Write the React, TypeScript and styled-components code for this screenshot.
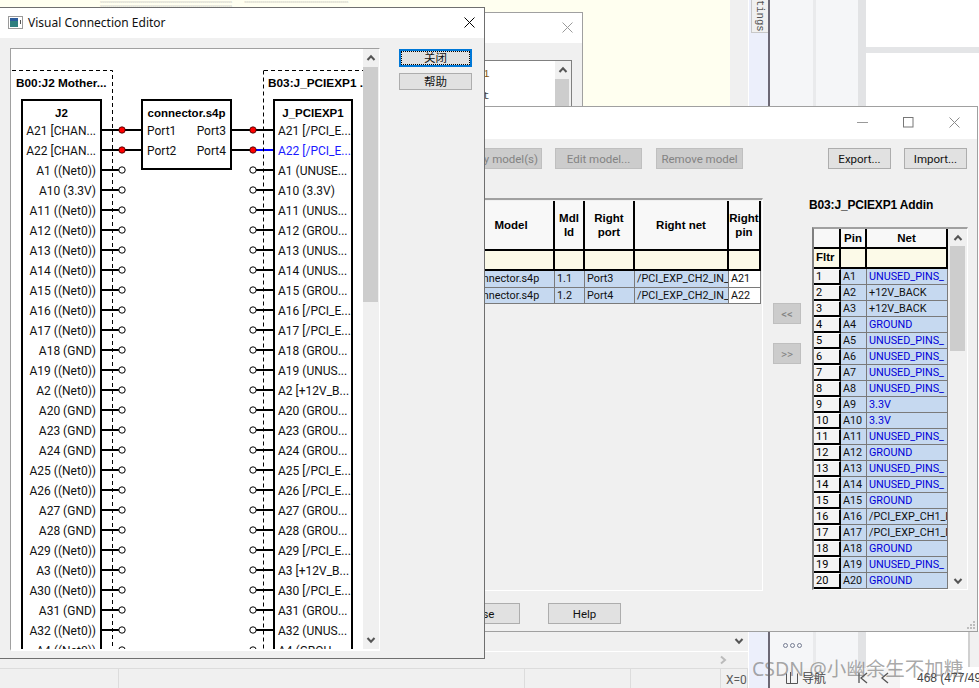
import React from "react";
import styled, { createGlobalStyle } from "styled-components";

const Global = createGlobalStyle`
  html, body { margin: 0; padding: 0; background: #f0f0f0; }
  body { font-family: "Liberation Sans", Arial, sans-serif; overflow: hidden; }
  * { box-sizing: border-box; }
`;

const Desktop = styled.div`
  position: relative;
  width: 979px;
  height: 688px;
  overflow: hidden;
  background: #f0f0f0;
`;

/* ---------- background application ---------- */
const Backdrop = styled.div`
  display: flex;
  height: 688px;
`;
const WorkColumn = styled.div`
  width: 748px;
  display: flex;
  flex-direction: column;
`;
const Editor = styled.div`
  height: 631px;
  display: flex;
  flex-direction: column;
  background: #f0f0f0;
`;
const YellowPane = styled.div`
  width: 730px;
  height: 631px;
  background: #fffff0;
  padding: 0 0 0 100px;
`;
const NoiseLine = styled.div`
  font-size: 4px;
  line-height: 4px;
  color: #c4c4bc;
  white-space: nowrap;
`;
const LowerPanel = styled.div`
  height: 37px;
  display: flex;
  flex-direction: column;
`;
const LowerInner = styled.div`
  height: 21px;
  width: 748px;
  display: flex;
  justify-content: flex-end;
  align-items: center;
  border-bottom: 1px solid #fff;
  padding-right: 4px;
`;
const LowerEdge = styled.div`
  flex: 1;
  display: flex;
  justify-content: flex-end;
  align-items: center;
  padding-right: 20px;
`;
const StatusBar = styled.div`
  height: 20px;
  border-top: 1px solid #dcdcdc;
  display: flex;
  background: #f0f0f0;
`;
const StatusCell = styled.div<{ $w: number }>`
  width: ${(p) => p.$w}px;
  border-right: 1px solid #dcdcdc;
  font-family: Roboto, sans-serif;
  font-size: 12px;
  color: #5a5a5a;
  padding: 4px 0 0 5px;
  white-space: nowrap;
`;
const SideRail = styled.div`
  width: 22px;
  background: #eceffb;
  border-left: 1px solid #fff;
  border-right: 2px solid #6c6875;
`;
const SideTab = styled.div`
  height: 33px;
  background: #f0f0f0;
  border-bottom: 1px solid #c8c8c8;
  border-left: 1px solid #c8c8c8;
  margin-left: 2px;
  font-family: "Liberation Mono", monospace;
  font-size: 10.5px;
  line-height: 16px;
  color: #555;
  writing-mode: vertical-rl;
  text-align: right;
  overflow: hidden;
`;
const RightArea = styled.div`
  flex: 1;
  display: flex;
  flex-direction: column;
`;
const ToolColumns = styled.div`
  height: 668px;
  display: flex;
`;
const ToolColumn = styled.div<{ $w: number; $bg: string }>`
  width: ${(p) => p.$w}px;
  background: ${(p) => p.$bg};
  display: flex;
  flex-direction: column;
  justify-content: flex-end;
  align-items: center;
`;
const Dots = styled.div`
  display: flex;
  gap: 2px;
  margin-bottom: 20px;
  margin-left: 2px;
`;
const Dot = styled.span`
  width: 5px;
  height: 5px;
  border-radius: 50%;
  border: 1.5px solid #757c92;
`;
const WhitePane = styled.div`
  flex: 1;
  display: flex;
  flex-direction: column;
  background: #fff;
`;
const HBand = styled.div`
  height: 6px;
  margin-top: 47px;
  background: #e4e5e7;
`;
const WhiteFill = styled.div`
  flex: 1;
  display: flex;
  align-items: flex-end;
  justify-content: flex-end;
`;
const Thumb = styled.div`
  width: 24px;
  height: 36px;
  background: #f1f1f1;
  border-left: 2px solid #d0d0d0;
  font-size: 5px;
  line-height: 8px;
  color: #888;
  padding: 5px 0 0 11px;
  margin-bottom: 1px;
`;
const BottomNav = styled.div`
  height: 20px;
  display: flex;
  align-items: center;
  background: linear-gradient(90deg, #f4f4f4 0 130px, #fff 130px);
  font-size: 12px;
  color: #444;
  white-space: nowrap;
`;
const NavLabel = styled.span`
  font-family: "Noto Sans CJK SC", sans-serif;
  font-size: 12px;
  margin-left: 3px;
  line-height: 1;
`;
const NavIcons = styled.div`
  display: flex;
  gap: 10px;
  margin-left: 31px;
  color: #555;
`;
const PageText = styled.span`
  margin-left: 26px;
  font-size: 12px;
  color: #444;
`;

/* ---------- windows ---------- */
const Window = styled.div<{ $l: number; $t: number; $w: number; $h: number; $edge: string }>`
  position: absolute;
  left: ${(p) => p.$l}px;
  top: ${(p) => p.$t}px;
  width: ${(p) => p.$w}px;
  height: ${(p) => p.$h}px;
  background: #f0f0f0;
  border: 1px solid ${(p) => p.$edge};
  display: flex;
  flex-direction: column;
`;
const TitleBar = styled.div<{ $h: number }>`
  height: ${(p) => p.$h}px;
  flex: none;
  background: #fff;
  display: flex;
  align-items: center;
  padding-bottom: 2px;
`;
const TitleIcon = styled.svg`
  margin-left: 8px;
  flex: none;
`;
const TitleText = styled.span`
  margin-left: 5px;
  font-family: "Noto Sans", sans-serif;
  font-size: 12px;
  color: #111;
`;
const TitleGap = styled.div`
  flex: 1;
`;
const Caption = styled.svg<{ $mr: number }>`
  flex: none;
  margin-right: ${(p) => p.$mr}px;
`;

const Btn = styled.div<{ $w: number; $h?: number; $off?: boolean; $focus?: boolean }>`
  width: ${(p) => p.$w}px;
  height: ${(p) => p.$h ?? 21}px;
  flex: none;
  background: ${(p) => (p.$off ? "#cccccc" : "#e1e1e1")};
  border: ${(p) =>
    p.$focus ? "2px solid #0078d7" : `1px solid ${p.$off ? "#bfbfbf" : "#adadad"}`};
  color: ${(p) => (p.$off ? "#838383" : "#111")};
  font-family: Roboto, "Noto Sans CJK SC", sans-serif;
  font-size: 11.5px;
  display: flex;
  align-items: center;
  justify-content: center;
  white-space: nowrap;
  overflow: hidden;
  padding-bottom: ${(p) => (p.$h ? 2 : 0)}px;
  ${(p) => (p.$focus ? "outline: 1px dotted #000; outline-offset: -3px;" : "")}
`;

/* ---------- scrollbars ---------- */
const ScrollTrack = styled.div<{ $w: number }>`
  width: ${(p) => p.$w}px;
  flex: none;
  display: flex;
  flex-direction: column;
  align-items: flex-start;
  background: #f0f0f0;
`;
const ScrollArrow = styled.div<{ $h: number }>`
  height: ${(p) => p.$h}px;
  flex: none;
  align-self: stretch;
  display: flex;
  align-items: center;
  justify-content: center;
`;
const ScrollThumb = styled.div<{ $h: number; $w: number; $ml?: number }>`
  height: ${(p) => p.$h}px;
  width: ${(p) => p.$w}px;
  margin-left: ${(p) => p.$ml ?? 0}px;
  flex: none;
  background: #cdcdcd;
`;
const ScrollSpacer = styled.div`
  flex: 1;
`;

const Chevron = ({ dir }: { dir: "up" | "down" | "right" }) => (
  <svg width="10" height="10" viewBox="0 0 10 10" fill="none" stroke={dir === "right" ? "#bbb" : "#555"} strokeWidth="2">
    {dir === "up" && <path d="M1.5 7 L5 3.2 L8.5 7" />}
    {dir === "down" && <path d="M1.5 3 L5 6.8 L8.5 3" />}
    {dir === "right" && <path d="M3 1.5 L7 5 L3 8.5" />}
  </svg>
);

/* ---------- visual connection editor ---------- */
const EditorBody = styled.div`
  flex: 1;
  display: flex;
  padding: 10px 0 7px 10px;
`;
const Canvas = styled.div`
  width: 370px;
  display: flex;
  border-left: 1px solid #a0a0a0;
  border-top: 1px solid #a0a0a0;
  border-bottom: 2px solid #fff;
  border-right: 1px solid #fff;
`;
const Diagram = styled.div`
  position: relative;
  flex: 1;
  background: #fff;
  overflow: hidden;
`;
const Wires = styled.svg`
  position: absolute;
  left: 0;
  top: 0;
`;
const GroupName = styled.div<{ $l: number }>`
  position: absolute;
  left: ${(p) => p.$l}px;
  top: 27px;
  font-size: 11.8px;
  line-height: 14px;
  font-weight: bold;
  color: #000;
  white-space: nowrap;
`;
const Node = styled.div<{ $l: number; $w: number; $h?: number }>`
  position: absolute;
  left: ${(p) => p.$l}px;
  top: 50px;
  width: ${(p) => p.$w}px;
  ${(p) => (p.$h ? `height: ${p.$h}px;` : "")}
  background: #fff;
  border: 2px solid #000;
  padding-top: 4px;
`;
const NodeTitle = styled.div`
  height: 16px;
  font-size: 11.5px;
  line-height: 16px;
  font-weight: bold;
  text-align: center;
  color: #000;
  white-space: nowrap;
`;
const PinLabel = styled.div<{ $right?: boolean; $blue?: boolean }>`
  height: 20px;
  font-family: Roboto, sans-serif;
  font-size: 12px;
  line-height: 20px;
  white-space: nowrap;
  text-align: ${(p) => (p.$right ? "right" : "left")};
  padding: ${(p) => (p.$right ? "0 4px 0 0" : "0 0 0 3px")};
  color: ${(p) => (p.$blue ? "#1a1aff" : "#111")};
`;
const PortRow = styled.div`
  height: 20px;
  display: flex;
  justify-content: space-between;
  padding: 0 4px;
  font-family: Roboto, sans-serif;
  font-size: 12px;
  line-height: 20px;
  color: #111;
`;

const leftPins = [
  "A21 [CHAN...", "A22 [CHAN...", "A1 ((Net0))", "A10 (3.3V)", "A11 ((Net0))", "A12 ((Net0))", "A13 ((Net0))",
  "A14 ((Net0))", "A15 ((Net0))", "A16 ((Net0))", "A17 ((Net0))", "A18 (GND)", "A19 ((Net0))", "A2 ((Net0))",
  "A20 (GND)", "A23 (GND)", "A24 (GND)", "A25 ((Net0))", "A26 ((Net0))", "A27 (GND)", "A28 (GND)", "A29 ((Net0))",
  "A3 ((Net0))", "A30 ((Net0))", "A31 (GND)", "A32 ((Net0))", "A4 ((Net0))",
];
const rightPins = [
  "A21 [/PCI_E...", "A22 [/PCI_E...", "A1 (UNUSE...", "A10 (3.3V)", "A11 (UNUS...", "A12 (GROU...", "A13 (UNUS...",
  "A14 (UNUS...", "A15 (GROU...", "A16 [/PCI_E...", "A17 [/PCI_E...", "A18 (GROU...", "A19 (UNUS...", "A2 [+12V_B...",
  "A20 (GROU...", "A23 (GROU...", "A24 (GROU...", "A25 [/PCI_E...", "A26 [/PCI_E...", "A27 (GROU...", "A28 (GROU...",
  "A29 [/PCI_E...", "A3 [+12V_B...", "A30 [/PCI_E...", "A31 (GROU...", "A32 (UNUS...", "A4 (GROU...",
];

const OX = 11;
const OY = 49;
const pinY = (i: number) => 130 + i * 20 - OY;

const DiagramWires = () => {
  const lx = 122 - OX;
  const rx = 253 - OX;
  return (
    <Wires width="353" height="600" viewBox="0 0 353 600">
      {leftPins.map((_, i) => {
        const y = pinY(i);
        if (i < 2) return null;
        return (
          <g key={i}>
            <path d={`M${102 - OX} ${y}H${lx - 3}`} stroke="#000" strokeWidth="2" />
            <path d={`M${rx + 3} ${y}H${273 - OX}`} stroke="#000" strokeWidth="2" />
            <circle cx={lx} cy={y} r="3.2" fill="#fff" stroke="#000" />
            <circle cx={rx} cy={y} r="3.2" fill="#fff" stroke="#000" />
          </g>
        );
      })}
      <path d={`M${102 - OX} ${pinY(0)}H${141 - OX}M${102 - OX} ${pinY(1)}H${141 - OX}`} stroke="#000" strokeWidth="2" />
      <path d={`M${232 - OX} ${pinY(0)}H${273 - OX}M${232 - OX} ${pinY(1)}H${rx}`} stroke="#000" strokeWidth="2" />
      <path d={`M${rx} ${pinY(1)}H${273 - OX}`} stroke="#0000ff" strokeWidth="2" />
      <path
        d={`M${12 - OX} ${70.5 - OY}H${112.5 - OX}V600M${264 - OX} ${70.5 - OY}H353M${263.5 - OX} ${70.5 - OY}V600`}
        stroke="#000"
        strokeWidth="1"
        strokeDasharray="4 3"
        fill="none"
      />
      {[0, 1].map((i) => (
        <g key={i}>
          <circle cx={lx} cy={pinY(i)} r="3.2" fill="#ff0000" stroke="#300" strokeWidth="0.8" />
          <circle cx={rx} cy={pinY(i)} r="3.2" fill="#ff0000" stroke="#300" strokeWidth="0.8" />
        </g>
      ))}
    </Wires>
  );
};

const SideButtons = styled.div`
  display: flex;
  flex-direction: column;
  gap: 6px;
  margin-left: 19px;
  padding-top: 1px;
`;

/* ---------- model window ---------- */
const ToolBar = styled.div`
  display: flex;
  margin-top: 9px;
  padding: 0 10px 0 19px;
  align-items: center;
`;
const ToolGap = styled.div<{ $w?: number }>`
  ${(p) => (p.$w ? `width: ${p.$w}px;` : "flex: 1;")}
`;
const MainRow = styled.div`
  display: flex;
  margin-top: 29px;
  height: 393px;
`;
const TablePanel = styled.div`
  width: 332px;
  border-top: 2px solid #a0a0a0;
  border-right: 1px solid #fff;
  border-bottom: 1px solid #fff;
  padding-left: 38px;
  padding-top: 1px;
`;
const ModelGrid = styled.div`
  display: grid;
  grid-template-columns: 86px 30px 50px 94px 32px;
  grid-template-rows: 50px 20px 17px 16px;
  width: 292px;
`;
const HeadCell = styled.div`
  background: #f8f8f8;
  border-right: 2px solid #000;
  border-bottom: 2px solid #000;
  font-size: 11.5px;
  font-weight: bold;
  line-height: 14px;
  padding-bottom: 1px;
  color: #000;
  display: flex;
  align-items: center;
  justify-content: center;
  text-align: center;
  overflow: hidden;
`;
const FilterCell = styled.div`
  background: #fcfae8;
  border-right: 2px solid #000;
  border-bottom: 2px solid #000;
  font-size: 11.5px;
  font-weight: bold;
  padding-left: 2px;
  line-height: 16px;
  color: #000;
`;
const DataCell = styled.div<{ $plain?: boolean; $color?: string }>`
  background: ${(p) => (p.$plain ? "#fff" : "#c6d9f0")};
  border-right: 1px solid #7a7a7a;
  border-bottom: 1px solid #7a7a7a;
  font-family: Roboto, sans-serif;
  font-size: 10.8px;
  line-height: 15px;
  padding-left: 2px;
  color: ${(p) => p.$color ?? "#111"};
  white-space: nowrap;
  overflow: hidden;
`;
const ArrowColumn = styled.div`
  width: 46px;
  flex: none;
  padding: 105px 0 0 10px;
  display: flex;
  flex-direction: column;
  gap: 19px;
`;
const ListColumn = styled.div`
  flex: none;
  width: 165px;
  display: flex;
  flex-direction: column;
`;
const ListTitle = styled.div`
  font-size: 12px;
  letter-spacing: -0.15px;
  font-weight: bold;
  line-height: 14px;
  color: #000;
  white-space: nowrap;
`;
const ListFrame = styled.div`
  margin: 15px 0 0 3px;
  width: 156px;
  height: 363px;
  display: flex;
  border-top: 2px solid #a0a0a0;
  border-left: 2px solid #808080;
  border-right: 1px solid #fff;
  border-bottom: 1px solid #fff;
`;
const PinGrid = styled.div`
  display: grid;
  grid-template-columns: 27px 26px 81px;
  grid-template-rows: 20px 20px repeat(20, 16px);
  width: 134px;
  align-self: flex-start;
`;
const IndexCell = styled.div`
  background: #f4f4f4;
  border-top: 1px solid #fff;
  border-right: 2px solid #000;
  border-bottom: 2px solid #000;
  font-family: Roboto, sans-serif;
  font-size: 11px;
  line-height: 13px;
  padding-left: 2px;
  color: #000;
`;
const Footer = styled.div`
  display: flex;
  margin-top: 12px;
  padding-left: 9px;
`;
const Grip = styled.svg`
  position: absolute;
  right: 1px;
  bottom: 1px;
`;

const Watermark = styled.div`
  position: absolute;
  left: 752px;
  top: 657px;
  font-family: "Noto Sans", "Noto Sans CJK SC", sans-serif;
  font-size: 19.5px;
  line-height: 24px;
  color: rgba(105, 105, 105, 0.58);
  white-space: nowrap;
`;

const BackText = styled.div<{ $c: string }>`
  padding-left: 181px;
  color: ${(p) => p.$c};
`;
const Mono2 = styled.div`
  font-family: "Liberation Mono", monospace;
  font-size: 11px;
  line-height: 22px;
  padding: 2px 0 0 0;
  flex: 1;
  background: #fff;
  overflow: hidden;
`;
const BackBody = styled.div`
  flex: 1;
  padding: 17px 10px 0 0;
  display: flex;
  min-height: 0;
`;
const BackPanel = styled.div`
  flex: 1;
  display: flex;
  border: 1px solid #808080;
  border-bottom: 0;
  min-height: 0;
`;

const X = ({ color, size = 10 }: { color: string; size?: number }) => (
  <path d={`M0.5 0.5L${size + 0.5} ${size + 0.5}M${size + 0.5} 0.5L0.5 ${size + 0.5}`} stroke={color} strokeWidth="1" fill="none" />
);

const GripDots = () => (
  <Grip width="10" height="10" viewBox="0 0 10 10">
    {[[7, 1], [4, 4], [7, 4], [1, 7], [4, 7], [7, 7]].map(([x, y], i) => (
      <rect key={i} x={x} y={y} width="2" height="2" fill="#bdbdbd" />
    ))}
  </Grip>
);

const net = (n: string) => (n === "+12V_BACK" || n.startsWith("/") ? "#111" : "#0000d8");
const U = "UNUSED_PINS_";
const G = "GROUND";
const B = "+12V_BACK";
const V = "3.3V";
const P = "/PCI_EXP_CH1_I";
const nets = [U, B, B, G, U, U, U, U, V, V, U, G, U, U, G, P, P, G, U, G];

const models = [
  ["connector.s4p", "1.1", "Port3", "/PCI_EXP_CH2_IN_", "A21"],
  ["connector.s4p", "1.2", "Port4", "/PCI_EXP_CH2_IN_", "A22"],
];

export default function App() {
  return (
    <Desktop>
      <Global />
      <Backdrop>
        <WorkColumn>
          <Editor>
            <YellowPane>
              <NoiseLine>ssssssssssssssssssssssssssssssssssssssssssssssssssssssssssssssssss &nbsp; &nbsp; &nbsp; &nbsp; &nbsp; ssssssssssssssssssssssssssssssssssssssssssssssssssss</NoiseLine>
              <NoiseLine>ssssssssssssssssssssssssssssssssssssssssssssssssssssssssssssssssss</NoiseLine>
            </YellowPane>
          </Editor>
          <LowerPanel>
            <LowerInner>
              <Chevron dir="down" />
            </LowerInner>
            <LowerEdge>
              <Chevron dir="right" />
            </LowerEdge>
          </LowerPanel>
          <StatusBar>
            <StatusCell $w={119} />
            <StatusCell $w={406} />
            <StatusCell $w={106} />
            <StatusCell $w={90} />
            <StatusCell $w={27}>X=0</StatusCell>
          </StatusBar>
        </WorkColumn>
        <SideRail>
          <SideTab>tings</SideTab>
        </SideRail>
        <RightArea>
          <ToolColumns>
            <ToolColumn $w={43} $bg="#f5f6f8">
              <Dots>
                <Dot />
                <Dot />
                <Dot />
              </Dots>
            </ToolColumn>
            <ToolColumn $w={3} $bg="#e9eaec" />
            <ToolColumn $w={42} $bg="#f5f6f8" />
            <ToolColumn $w={8} $bg="#e2e3e5" />
            <WhitePane>
              <HBand />
              <WhiteFill>
                <Thumb>
                  He
                  <br />
                  Ste
                  <br />
                  imp
                </Thumb>
              </WhiteFill>
            </WhitePane>
          </ToolColumns>
          <BottomNav>
            <svg width="14" height="14" viewBox="0 0 14 14" fill="none" stroke="#555" style={{ marginLeft: 15 }}>
              <path d="M1.5 2.5V12.5H12.5V2.5M5.5 1V12" />
            </svg>
            <NavLabel>导航</NavLabel>
            <NavIcons>
              <svg width="12" height="12" viewBox="0 0 12 12" fill="none" stroke="#555" strokeWidth="1.3">
                <path d="M2 1V11M10 1L4 6L10 11" />
              </svg>
              <svg width="12" height="12" viewBox="0 0 12 12" fill="none" stroke="#555" strokeWidth="1.3">
                <path d="M9 1L3 6L9 11" />
              </svg>
            </NavIcons>
            <PageText>468 (477/499)</PageText>
          </BottomNav>
        </RightArea>
      </Backdrop>

      {/* window behind */}
      <Window $l={300} $t={12} $w={283} $h={300} $edge="#a0a0a0">
        <TitleBar $h={30}>
          <TitleGap />
          <Caption $mr={9} width="11" height="11" viewBox="0 0 11 11">
            <X color="#9a9a9a" />
          </Caption>
        </TitleBar>
        <BackBody>
          <BackPanel>
            <Mono2>
              <BackText $c="#8a5a10">1</BackText>
              <BackText $c="#444">t</BackText>
            </Mono2>
            <ScrollTrack $w={16}>
              <ScrollArrow $h={18}>
                <Chevron dir="up" />
              </ScrollArrow>
              <ScrollThumb $h={200} $w={14} />
            </ScrollTrack>
          </BackPanel>
        </BackBody>
      </Window>

      {/* model window */}
      <Window $l={430} $t={106} $w={548} $h={526} $edge="#a0a0a0">
        <TitleBar $h={32}>
          <TitleGap />
          <Caption $mr={35} width="11" height="3" viewBox="0 0 11 3">
            <path d="M0 1.5H11" stroke="#999" />
          </Caption>
          <Caption $mr={35} width="11" height="11" viewBox="0 0 11 11">
            <rect x="0.5" y="0.5" width="9.5" height="9.5" fill="none" stroke="#777" />
          </Caption>
          <Caption $mr={17} width="11" height="11" viewBox="0 0 11 11">
            <X color="#8a8a8a" />
          </Caption>
        </TitleBar>
        <ToolBar>
          <Btn $w={92} $off>Modify model(s)</Btn>
          <ToolGap $w={13} />
          <Btn $w={87} $off>Edit model...</Btn>
          <ToolGap $w={14} />
          <Btn $w={87} $off>Remove model</Btn>
          <ToolGap />
          <Btn $w={63}>Export...</Btn>
          <ToolGap $w={13} />
          <Btn $w={63}>Import...</Btn>
        </ToolBar>
        <MainRow>
          <TablePanel>
            <ModelGrid>
              <HeadCell>Model</HeadCell>
              <HeadCell>
                Mdl
                <br />
                Id
              </HeadCell>
              <HeadCell>
                Right
                <br />
                port
              </HeadCell>
              <HeadCell>Right net</HeadCell>
              <HeadCell>
                Right
                <br />
                pin
              </HeadCell>
              <FilterCell />
              <FilterCell />
              <FilterCell />
              <FilterCell />
              <FilterCell />
              {models.map((m) =>
                m.map((c, i) => (
                  <DataCell key={m[1] + i} $plain={i === 4}>
                    {c}
                  </DataCell>
                )),
              )}
            </ModelGrid>
          </TablePanel>
          <ArrowColumn>
            <Btn $w={28} $off>&lt;&lt;</Btn>
            <Btn $w={28} $off>&gt;&gt;</Btn>
          </ArrowColumn>
          <ListColumn>
            <ListTitle>B03:J_PCIEXP1 Addin</ListTitle>
            <ListFrame>
              <PinGrid>
                <HeadCell />
                <HeadCell>Pin</HeadCell>
                <HeadCell>Net</HeadCell>
                <FilterCell>Fltr</FilterCell>
                <FilterCell />
                <FilterCell />
                {nets.map((n, i) => (
                  <React.Fragment key={i}>
                    <IndexCell>{i + 1}</IndexCell>
                    <DataCell>A{i + 1}</DataCell>
                    <DataCell $color={net(n)}>{n}</DataCell>
                  </React.Fragment>
                ))}
              </PinGrid>
              <ScrollTrack $w={19}>
                <ScrollArrow $h={17}>
                  <Chevron dir="up" />
                </ScrollArrow>
                <ScrollThumb $h={105} $w={15} $ml={2} />
                <ScrollSpacer />
                <ScrollArrow $h={17}>
                  <Chevron dir="down" />
                </ScrollArrow>
              </ScrollTrack>
            </ListFrame>
          </ListColumn>
        </MainRow>
        <Footer>
          <Btn $w={80}>Close</Btn>
          <ToolGap $w={28} />
          <Btn $w={73}>Help</Btn>
        </Footer>
        <GripDots />
      </Window>

      {/* editor window */}
      <Window $l={-1} $t={7} $w={486} $h={652} $edge="#6f6f6f">
        <TitleBar $h={30}>
          <TitleIcon width="15" height="13" viewBox="0 0 15 13">
            <rect x="0.5" y="0.5" width="14" height="12" fill="#fff" stroke="#9a9a9a" />
            <rect x="2" y="2" width="8" height="9" fill="#2f7f7f" />
            <rect x="2" y="2" width="8" height="3" fill="#2c5c9c" />
            <rect x="12" y="4" width="1" height="4" fill="#555" />
          </TitleIcon>
          <TitleText>Visual Connection Editor</TitleText>
          <TitleGap />
          <Caption $mr={9} width="11" height="11" viewBox="0 0 11 11">
            <X color="#000" />
          </Caption>
        </TitleBar>
        <EditorBody>
          <Canvas>
            <Diagram>
              <DiagramWires />
              <GroupName $l={5}>B00:J2 Mother...</GroupName>
              <GroupName $l={257}>B03:J_PCIEXP1 ...</GroupName>
              <Node $l={10} $w={81}>
                <NodeTitle>J2</NodeTitle>
                {leftPins.map((p) => (
                  <PinLabel key={p} $right>
                    {p}
                  </PinLabel>
                ))}
              </Node>
              <Node $l={130} $w={91} $h={71}>
                <NodeTitle>connector.s4p</NodeTitle>
                <PortRow>
                  <span>Port1</span>
                  <span>Port3</span>
                </PortRow>
                <PortRow>
                  <span>Port2</span>
                  <span>Port4</span>
                </PortRow>
              </Node>
              <Node $l={262} $w={80}>
                <NodeTitle>J_PCIEXP1</NodeTitle>
                {rightPins.map((p, i) => (
                  <PinLabel key={p} $blue={i === 1}>
                    {p}
                  </PinLabel>
                ))}
              </Node>
            </Diagram>
            <ScrollTrack $w={16}>
              <ScrollArrow $h={18}>
                <Chevron dir="up" />
              </ScrollArrow>
              <ScrollThumb $h={235} $w={15} />
              <ScrollSpacer />
              <ScrollArrow $h={18}>
                <Chevron dir="down" />
              </ScrollArrow>
            </ScrollTrack>
          </Canvas>
          <SideButtons>
            <Btn $w={73} $h={18} $focus>关闭</Btn>
            <Btn $w={73} $h={17}>帮助</Btn>
          </SideButtons>
        </EditorBody>
      </Window>

      <Watermark>CSDN @小幽余生不加糖</Watermark>
    </Desktop>
  );
}
